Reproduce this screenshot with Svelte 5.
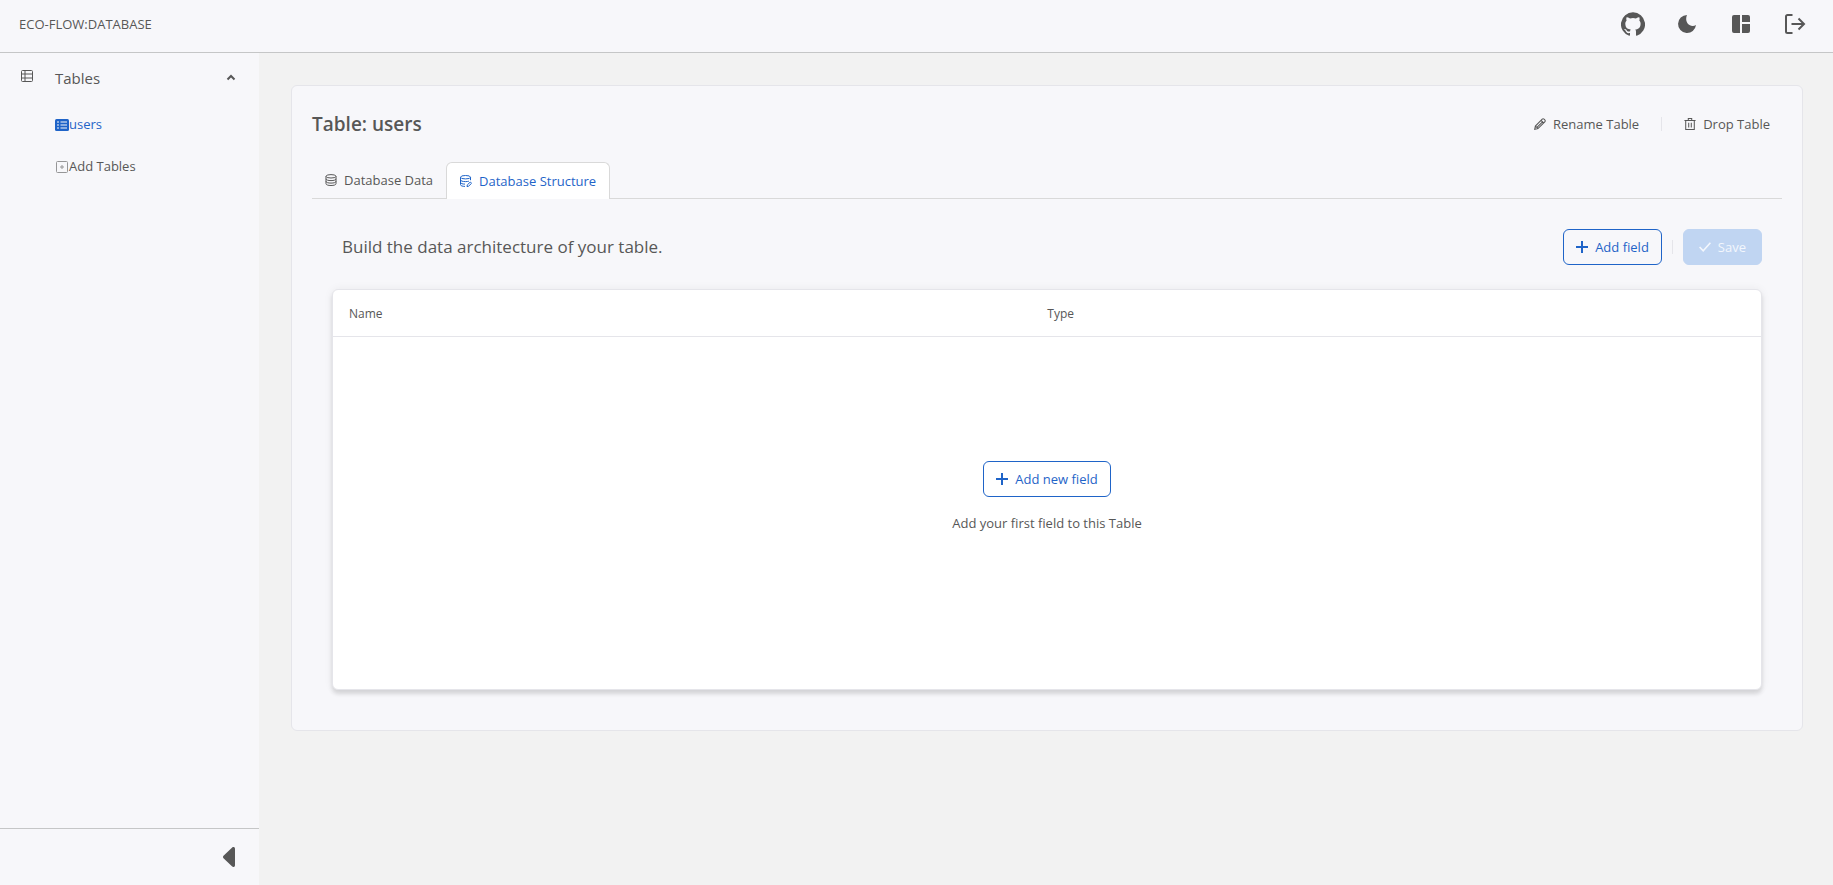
<script>
	let tablesOpen = true;
	let collapsed = false;
	let activeTab = 'structure';
	let tables = ['users'];
	let columns = ['Name', 'Type'];
</script>

<div class="layout" class:collapsed>
	<header class="topbar">
		<span class="brand">ECO-FLOW:DATABASE</span>
		<nav class="actions">
			<a href="#github" aria-label="GitHub">
				<svg viewBox="0 0 24 24" fill="currentColor">
					<path
						d="M12 .3a12 12 0 0 0-3.8 23.4c.6.1.8-.3.8-.6v-2c-3.3.7-4-1.6-4-1.6-.6-1.4-1.4-1.8-1.4-1.8-1-.7.1-.7.1-.7 1.2 0 1.9 1.2 1.9 1.2 1 1.8 2.8 1.3 3.5 1 0-.8.4-1.3.7-1.6-2.7-.3-5.5-1.3-5.5-6 0-1.2.5-2.3 1.3-3.1-.2-.4-.6-1.6 0-3.2 0 0 1-.3 3.4 1.2a11.5 11.5 0 0 1 6 0c2.3-1.5 3.3-1.2 3.3-1.2.6 1.6.2 2.8 0 3.2.9.8 1.3 1.9 1.3 3.2 0 4.6-2.8 5.6-5.5 5.9.5.4.9 1 .9 2.2v3.3c0 .3.1.7.8.6A12 12 0 0 0 12 .3"
					/>
				</svg>
			</a>
			<button aria-label="Dark mode">
				<svg viewBox="0 0 24 24" fill="currentColor">
					<path d="M12 3a9 9 0 1 0 9 10c-2 1.200-4.500 1.200-6.500 0-3.200-1.900-4.200-5.800-2.500-10z" />
				</svg>
			</button>
			<button aria-label="Dashboard">
				<svg viewBox="0 0 24 24" fill="currentColor">
					<path
						d="M11 21H5a2 2 0 0 1-2-2V5a2 2 0 0 1 2-2h6v18zm2 0h6a2 2 0 0 0 2-2v-7h-8v9zm8-11V5a2 2 0 0 0-2-2h-6v7h8z"
					/>
				</svg>
			</button>
			<button aria-label="Log out">
				<svg viewBox="0 0 24 24" fill="none" stroke="currentColor" stroke-width="2">
					<path d="M9.500 3H4.500a1.500 1.500 0 0 0-1.500 1.500v15A1.500 1.500 0 0 0 4.500 21h5M8.500 12h12M15.500 6.500 21 12l-5.500 5.500" />
				</svg>
			</button>
		</nav>
	</header>

	<aside class="sidebar">
		<div class="menu">
			<button
				class="menu-title"
				aria-expanded={tablesOpen}
				on:click={() => (tablesOpen = !tablesOpen)}
			>
				<svg class="menu-icon" viewBox="0 0 14 14" fill="none" stroke="currentColor">
					<rect x="1.500" y="1.500" width="11" height="11" rx="1" />
					<path d="M1.500 5h11M1.500 9h11M5 1.500v11" />
				</svg>
				<span>Tables</span>
				<svg class="caret" viewBox="0 0 10 10" fill="none" stroke="currentColor" stroke-width="2">
					<path d="M1.500 6.500 5 3 8.500 6.500" />
				</svg>
			</button>
			{#if tablesOpen}
				<ul>
					{#each tables as table}
						<li>
							<a class="current" href="#{table}">
								<svg viewBox="0 0 14 14">
									<rect y="2" width="14" height="12" rx="1.500" fill="currentColor" />
									<path stroke="#f7f7fa" stroke-width="1.200" d="M2 5h2M5.500 5H12M2 8h2M5.500 8H12M2 11h2M5.500 11H12" />
								</svg>{table}
							</a>
						</li>
					{/each}
					<li>
						<a href="#add">
							<svg class="faint" viewBox="0 0 14 14" fill="none" stroke="currentColor">
								<rect x="1.500" y="2.500" width="11" height="11" rx="1" />
								<path d="M7 6v4M5 8h4" />
							</svg>Add Tables
						</a>
					</li>
				</ul>
			{/if}
		</div>
		<div class="collapse">
			<button aria-label="Collapse sidebar" on:click={() => (collapsed = !collapsed)}>
				<svg viewBox="0 0 12 20" fill="currentColor">
					<path d="M.5 8.800 9.200.5C10.300-.4 12 0 12 1.800v16.400c0 1.800-1.700 2.200-2.800 1.300L.5 11.200c-.7-.7-.7-1.700 0-2.400z" />
				</svg>
			</button>
		</div>
	</aside>

	<main>
		<section class="panel">
			<div class="panel-head">
				<h1>Table: users</h1>
				<div class="tools">
					<button class="link">
						<svg viewBox="0 0 14 14" fill="none" stroke="currentColor" stroke-width="1.200">
							<path d="M.8 13.200l.8-3.800L9.600 1.400a1.500 1.500 0 0 1 2.100 0l.9.9a1.500 1.500 0 0 1 0 2.100L4.600 12.400zM8.300 2.700l3 3M10 4.400l-6.300 6.300M1.800 9.400l2.800 2.800" />
						</svg>
						Rename Table
					</button>
					<span class="divider"></span>
					<button class="link">
						<svg viewBox="0 0 14 14" fill="none" stroke="currentColor" stroke-width="1.200">
							<path d="M.5 3h13M2 3v10.400h10V3M5 3V.6h4V3M5.500 5.500v5.500M8.500 5.500v5.500" />
						</svg>
						Drop Table
					</button>
				</div>
			</div>

			<div class="tabs" role="tablist">
				<button
					role="tab"
					aria-selected={activeTab === 'data'}
					class:active={activeTab === 'data'}
					on:click={() => (activeTab = 'data')}
				>
					<svg viewBox="1 1 12 12" fill="none" stroke="currentColor">
						<ellipse cx="7" cy="3.300" rx="5" ry="1.700" />
						<path d="M2 3.300v7.400c0 1.200 2.200 1.800 5 1.800s5-.6 5-1.800V3.300M2 5.800c0 1.200 2.200 1.800 5 1.800s5-.6 5-1.800M2 8.300c0 1.200 2.200 1.800 5 1.800s5-.6 5-1.800" />
					</svg>
					Database Data
				</button>
				<button
					role="tab"
					aria-selected={activeTab === 'structure'}
					class:active={activeTab === 'structure'}
					on:click={() => (activeTab = 'structure')}
				>
					<svg viewBox="1 1 12 12" fill="none" stroke="currentColor">
						<ellipse cx="6.500" cy="3.200" rx="5" ry="1.700" />
						<path d="M1.500 3.200v7.400c0 1.200 2 1.800 4.500 1.800M11.500 3.200v3M1.500 5.800c0 1.200 2.200 1.800 5 1.800 1.400 0 2.500-.1 3.400-.4M1.500 8.300c0 1.200 2 1.800 4.500 1.800" />
						<path d="M8 12.600l.3-1.700 3-2.900 1.300 1.300-3 2.900z" />
					</svg>
					Database Structure
				</button>
			</div>

			<div class="builder">
				<div class="builder-head">
					<p class="lead">Build the data architecture of your table.</p>
					<div class="tools">
						<button class="outline">
							<svg viewBox="0 0 12 12" fill="none" stroke="currentColor" stroke-width="2">
								<path d="M6 0v12M0 6h12" />
							</svg>
							Add field
						</button>
						<span class="divider"></span>
						<button class="save" disabled>
							<svg viewBox="0 0 12 12" fill="none" stroke="currentColor" stroke-width="1.600">
								<path d="M.6 6l3.600 3.800 7.200-8" />
							</svg>
							Save
						</button>
					</div>
				</div>

				<div class="grid">
					<table>
						<thead>
							<tr>
								{#each columns as column}
									<th scope="col">{column}</th>
								{/each}
							</tr>
						</thead>
					</table>
					<div class="empty">
						<button class="outline">
							<svg viewBox="0 0 12 12" fill="none" stroke="currentColor" stroke-width="2">
								<path d="M6 0v12M0 6h12" />
							</svg>
							Add new field
						</button>
						<p>Add your first field to this Table</p>
					</div>
				</div>
			</div>
		</section>
	</main>
</div>

<style>
	:global(body) {
		margin: 0;
	}
	.layout {
		display: grid;
		grid-template-columns: 259px 1fr;
		grid-template-rows: 53px 1fr;
		min-height: 100vh;
		background: #f2f2f2;
		color: #575757;
		font-family: 'Segoe UI', 'Open Sans', 'Noto Sans', sans-serif;
		font-size: 13px;
		line-height: 20px;
	}
	.layout.collapsed {
		grid-template-columns: 56px 1fr;
	}
	.layout * {
		box-sizing: border-box;
	}
	button {
		display: flex;
		align-items: center;
		padding: 0;
		border: 0;
		background: none;
		color: inherit;
		font: inherit;
		cursor: pointer;
	}
	a {
		color: inherit;
		text-decoration: none;
	}
	p,
	h1,
	ul {
		margin: 0;
		padding: 0;
	}
	svg {
		flex: none;
		width: 12px;
		height: 12px;
	}
	.topbar {
		grid-column: 1 / -1;
		display: flex;
		align-items: center;
		justify-content: space-between;
		padding: 0 26px 4px 19px;
		border-bottom: 1px solid #c5c6c7;
		background: #f7f7fa;
	}
	.actions {
		display: flex;
		gap: 30px;
	}
	.actions a,
	.actions svg {
		display: block;
		width: 24px;
		height: 24px;
	}
	.sidebar {
		display: flex;
		flex-direction: column;
		justify-content: space-between;
		overflow: hidden;
		background: #f7f7fa;
	}
	.sidebar svg {
		width: 14px;
		height: 14px;
	}
	.menu-title {
		width: 100%;
		padding: 15px 23px 15px 20px;
		font-size: 15px;
	}
	.menu-title span {
		flex: 1;
		text-align: left;
	}
	.menu-icon {
		margin-right: 21px;
		margin-bottom: 4px;
	}
	.sidebar .caret {
		width: 10px;
		height: 10px;
	}
	ul {
		list-style: none;
	}
	li a {
		display: flex;
		align-items: center;
		padding: 11px 20px 11px 55px;
	}
	.current {
		color: #1f64c8;
	}
	.faint {
		opacity: 0.6;
	}
	.collapse {
		display: flex;
		justify-content: flex-end;
		padding: 18px 24px;
		border-top: 1px solid #c5c6c7;
	}
	.collapse button svg {
		width: 12px;
		height: 20px;
	}
	main {
		padding: 32px 30px 32px 32px;
	}
	.panel {
		padding: 20px;
		border: 1px solid #e5e5ea;
		border-radius: 6px;
		background: #f7f7fa;
	}
	.panel-head,
	.builder-head,
	.tools {
		display: flex;
		align-items: center;
		justify-content: space-between;
	}
	.panel-head {
		padding-right: 12px;
	}
	h1 {
		font-size: 19px;
		font-weight: 600;
		line-height: 36px;
	}
	.link,
	.outline,
	.save,
	.tabs button {
		gap: 7px;
	}
	.divider {
		width: 1px;
		height: 14px;
		margin: 0 10px;
		background: #e5e5ea;
	}
	.link + .divider {
		margin: 0 22px;
	}
	.tabs {
		display: flex;
		margin-top: 20px;
		border-bottom: 1px solid #d9d9d9;
	}
	.tabs button {
		height: 37px;
		margin-bottom: -1px;
		padding: 0 12px 2px;
		border: 1px solid transparent;
		border-bottom: 0;
		border-radius: 6px 6px 0 0;
	}
	.tabs .active {
		padding: 0 13px;
		border-color: #d9d9d9;
		background: #fff;
		color: #1f64c8;
	}
	.builder {
		padding: 30px 20px 20px;
	}
	.builder-head {
		padding-left: 10px;
	}
	.lead {
		font-size: 17px;
		line-height: 24px;
	}
	.outline,
	.save {
		height: 36px;
		padding: 0 12px;
		border: 1px solid #1f64c8;
		border-radius: 6px;
		color: #1f64c8;
	}
	.save {
		padding: 0 15px;
		border-color: #c0d5f2;
		background: #c0d5f2;
		color: #f3f7fd;
		cursor: default;
	}
	.grid {
		margin-top: 24px;
		border: 1px solid #e5e5ea;
		border-radius: 6px;
		background: #fff;
		box-shadow:
			0 4px 4px rgba(0, 0, 0, 0.12),
			0 0 10px rgba(0, 0, 0, 0.06);
	}
	table {
		width: 100%;
		border-collapse: collapse;
		table-layout: fixed;
	}
	th {
		height: 46px;
		padding: 2px 16px 0;
		border-bottom: 1px solid #e5e5ea;
		font-size: 12px;
		font-weight: 400;
		text-align: left;
	}
	th:first-child {
		width: 48.9%;
	}
	.empty {
		display: flex;
		flex-direction: column;
		align-items: center;
		gap: 16px;
		padding: 124px 16px 156px;
	}
</style>
